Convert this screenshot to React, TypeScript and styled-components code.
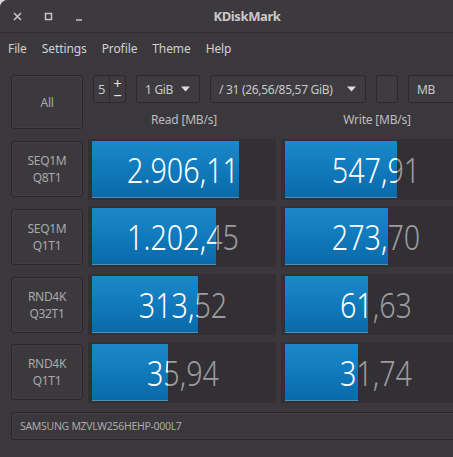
import React from "react";
import styled, { createGlobalStyle } from "styled-components";

const GlobalStyle = createGlobalStyle`
  html, body {
    margin: 0;
    padding: 0;
    overflow: hidden;
    background: #d9d9db;
  }
  body {
    font-family: "Noto Sans", "Open Sans", sans-serif;
  }
`;

const Window = styled.div`
  width: 494px;
  height: 457px;
  background: #3a383c;
  border-top-left-radius: 8px;
  overflow: hidden;
  display: flex;
  flex-direction: column;
`;

const TitleBar = styled.div`
  height: 33px;
  flex: none;
  display: grid;
  grid-template-columns: 1fr auto 1fr;
  align-items: center;
  background: #3c3a3f;
  border-bottom: 1px solid #2f2d31;
  box-sizing: border-box;
`;

const WinControls = styled.div`
  display: flex;
  align-items: center;
  gap: 22px;
  padding-left: 13px;
`;

const CtrlIcon = styled.svg`
  width: 9px;
  height: 9px;
  display: block;
  color: #c4c4c6;
`;

const Title = styled.div`
  font-size: 13px;
  font-weight: 700;
  color: #c9c9cb;
  letter-spacing: -0.4px;
`;

const MenuBar = styled.div`
  height: 31px;
  flex: none;
  display: flex;
  align-items: center;
  gap: 15px;
  padding-left: 8px;
`;

const MenuItem = styled.span`
  font-size: 12px;
  color: #d0d0d2;
  letter-spacing: -0.1px;
`;

const Content = styled.div`
  padding: 11px 0 0 11px;
  display: flex;
  flex-direction: column;
`;

const Grid = styled.div`
  display: grid;
  grid-template-columns: 72px 188px 188px;
  column-gap: 5px;
  row-gap: 6.7px;
`;

const TopArea = styled.div`
  grid-column: 2 / span 2;
  height: 57px;
  display: flex;
  flex-direction: column;
`;

const Toolbar = styled.div`
  display: flex;
  gap: 10px;
  padding-left: 5px;
  height: 28px;
`;

const Control = styled.div<{ $w: number }>`
  width: ${(p) => p.$w}px;
  height: 28px;
  box-sizing: border-box;
  flex: none;
  display: flex;
  align-items: center;
  justify-content: space-between;
  padding: 0 9px 0 8px;
  background: #3d3b40;
  border: 1px solid #2b292d;
  border-radius: 3px;
  color: #c8c8ca;
  font-size: 12px;
  letter-spacing: -0.3px;
  white-space: nowrap;
`;

const Spin = styled.div`
  width: 33px;
  height: 28px;
  box-sizing: border-box;
  flex: none;
  display: flex;
  align-items: stretch;
  background: #3d3b40;
  border: 1px solid #2b292d;
  border-radius: 3px;
  color: #c8c8ca;
  font-size: 13px;
`;

const SpinValue = styled.span`
  display: flex;
  align-items: center;
  padding-left: 4px;
  width: 11px;
  border-right: 1px solid #2e2c30;
`;

const SpinButtons = styled.div`
  flex: 1;
  display: flex;
  flex-direction: column;
  align-items: center;
  justify-content: center;
  gap: 0;
  font-size: 15px;
  color: #e4e4e6;
`;

const SpinSign = styled.span`
  display: block;
  height: 12px;
  line-height: 12px;
`;

const Headers = styled.div`
  flex: 1;
  display: grid;
  grid-template-columns: 188px 188px;
  column-gap: 5px;
  align-items: center;
  padding-top: 3px;
`;

const Header = styled.div`
  text-align: center;
  padding-left: 4px;
  font-size: 12px;
  color: #bdbdbf;
  letter-spacing: -0.2px;
`;

const Button = styled.div<{ $h: number }>`
  height: ${(p) => p.$h}px;
  box-sizing: border-box;
  align-self: center;
  display: flex;
  flex-direction: column;
  align-items: center;
  justify-content: center;
  background: #3b393d;
  border: 1px solid #2a282c;
  box-shadow: inset 0 0 0 1px #403e43;
  border-radius: 3px;
  color: #a9a9ab;
  font-size: 12px;
  line-height: 17px;
  letter-spacing: -0.3px;
`;

const AllButton = styled(Button)`
  align-self: start;
`;

const Cell = styled.div`
  background: #323034;
  padding: 2px 2px 2px 4px;
  box-sizing: border-box;
  height: 61px;
`;

const Track = styled.div`
  position: relative;
  width: 182px;
  height: 57px;
  overflow: hidden;
`;

const Value = styled.div<{ $light?: boolean }>`
  width: 182px;
  height: 57px;
  line-height: 57px;
  text-align: center;
  font-size: 35px;
  font-weight: 300;
  font-family: "Noto Sans", "Open Sans", sans-serif;
  color: ${(p) => (p.$light ? "#ffffff" : "#9c9c9e")};
  transform: scaleX(0.82);
  white-space: nowrap;
`;

const Fill = styled.div`
  position: absolute;
  left: 0;
  top: 0;
  bottom: 0;
  overflow: hidden;
  background: linear-gradient(#1b88c9 0%, #117bbd 45%, #0a69a8 100%);
  box-shadow: inset 0 -1px 0 #4f8fb6;
`;

const Device = styled.div`
  margin-top: 9px;
  width: 472px;
  height: 28px;
  box-sizing: border-box;
  display: flex;
  align-items: center;
  padding-left: 8px;
  background: #3a383c;
  border: 1px solid #2a282c;
  box-shadow: inset 0 0 0 1px #403e43;
  border-radius: 3px;
  color: #a9a9ab;
  font-size: 10.5px;
  letter-spacing: -0.3px;
`;

const Arrow = () => (
  <svg width="9" height="6" viewBox="0 0 9 6" style={{ flex: "none" }}>
    <polygon points="0,0.5 9,0.5 4.5,5.5" fill="#dcdcde" />
  </svg>
);

type Row = {
  l1: string;
  l2: string;
  read: string;
  rp: number;
  write: string;
  wp: number;
};

const rows: Row[] = [
  { l1: "SEQ1M", l2: "Q8T1", read: "2.906,11", rp: 81.0, write: "547,91", wp: 61.5 },
  { l1: "SEQ1M", l2: "Q1T1", read: "1.202,45", rp: 68.0, write: "273,70", wp: 56.6 },
  { l1: "RND4K", l2: "Q32T1", read: "313,52", rp: 58.2, write: "61,63", wp: 45.6 },
  { l1: "RND4K", l2: "Q1T1", read: "35,94", rp: 41.8, write: "31,74", wp: 40.1 },
];

const Bar = ({ text, pct }: { text: string; pct: number }) => (
  <Cell>
    <Track>
      <Value>{text}</Value>
      <Fill style={{ width: `${pct}%` }}>
        <Value $light>{text}</Value>
      </Fill>
    </Track>
  </Cell>
);

export default function App() {
  return (
    <>
      <GlobalStyle />
      <Window>
        <TitleBar>
          <WinControls>
            <CtrlIcon viewBox="0 0 9 9">
              <path d="M1 1 L8 8 M8 1 L1 8" stroke="currentColor" strokeWidth="1.6" />
            </CtrlIcon>
            <CtrlIcon viewBox="0 0 9 9">
              <rect x="1.5" y="1.5" width="6" height="6" fill="none" stroke="currentColor" strokeWidth="1.5" />
            </CtrlIcon>
            <CtrlIcon viewBox="0 0 9 9">
              <path d="M1 8 L7 8" stroke="currentColor" strokeWidth="1.6" />
            </CtrlIcon>
          </WinControls>
          <Title>KDiskMark</Title>
          <div />
        </TitleBar>
        <MenuBar>
          <MenuItem>File</MenuItem>
          <MenuItem>Settings</MenuItem>
          <MenuItem>Profile</MenuItem>
          <MenuItem>Theme</MenuItem>
          <MenuItem>Help</MenuItem>
        </MenuBar>
        <Content>
          <Grid>
            <AllButton $h={54}>All</AllButton>
            <TopArea>
              <Toolbar>
                <Spin>
                  <SpinValue>5</SpinValue>
                  <SpinButtons>
                    <SpinSign>+</SpinSign>
                    <SpinSign>−</SpinSign>
                  </SpinButtons>
                </Spin>
                <Control $w={64}>
                  <span>1 GiB</span>
                  <Arrow />
                </Control>
                <Control $w={156}>
                  <span>/ 31 (26,56/85,57 GiB)</span>
                  <Arrow />
                </Control>
                <Control $w={22} />
                <Control $w={73}>
                  <span>MB</span>
                  <Arrow />
                </Control>
              </Toolbar>
              <Headers>
                <Header>Read [MB/s]</Header>
                <Header>Write [MB/s]</Header>
              </Headers>
            </TopArea>
            {rows.map((r) => (
              <React.Fragment key={r.l1 + r.l2}>
                <Button $h={56}>
                  <span>{r.l1}</span>
                  <span>{r.l2}</span>
                </Button>
                <Bar text={r.read} pct={r.rp} />
                <Bar text={r.write} pct={r.wp} />
              </React.Fragment>
            ))}
          </Grid>
          <Device>SAMSUNG MZVLW256HEHP-000L7</Device>
        </Content>
      </Window>
    </>
  );
}
